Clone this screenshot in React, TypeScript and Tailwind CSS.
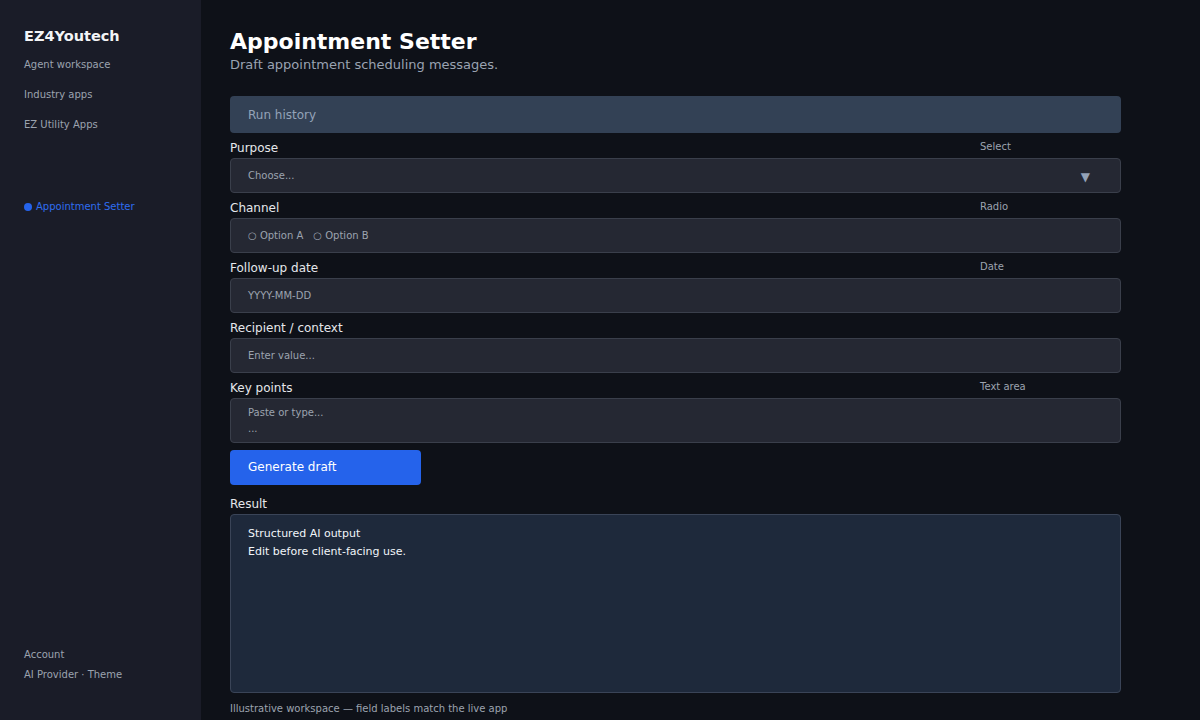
import React from "react";

const font = { fontFamily: '"DejaVu Sans", Verdana, sans-serif' };

function FieldLabel({ label, kind }: { label: string; kind?: string }) {
  return (
    <div className="flex items-start justify-between pt-[7px] mb-[3px] h-[22px]">
      <span className="text-[12px] leading-[16px] text-[#e5e7eb]">{label}</span>
      {kind && <span className="w-[141px] text-[10px] leading-[16px] text-[#9ca3af] -mt-[1px]">{kind}</span>}
    </div>
  );
}

function Box({ children, tall }: { children: React.ReactNode; tall?: boolean }) {
  return (
    <div
      className={`flex ${tall ? "flex-col h-[45px] pt-[7px]" : "items-center h-[35px]"} rounded-[4px] border border-[#3a3f4b] bg-[#252833] px-[17px] text-[10px] text-[#9ca3af]`}
    >
      {children}
    </div>
  );
}

export default function App() {
  return (
    <div className="flex h-[720px] w-[1200px] bg-[#0e1118] overflow-hidden" style={font}>
      <aside className="flex flex-col w-[201px] shrink-0 bg-[#1a1c28] px-6 pt-[28px] pb-[37px]">
        <h1 className="text-[14.5px] leading-[16px] font-bold text-[#f3f4f6]">EZ4Youtech</h1>
        <nav className="mt-[13px] flex flex-col gap-[14px] text-[10px] leading-[16px] text-[#9ca3af]">
          <span>Agent workspace</span>
          <span>Industry apps</span>
          <span>EZ Utility Apps</span>
        </nav>
        <div className="mt-[66px] flex items-center gap-[4px] text-[10px] leading-[16px] text-[#2f6df0]">
          <span className="inline-block w-[8px] h-[8px] rounded-full bg-[#2563eb]" />
          <span>Appointment Setter</span>
        </div>
        <div className="mt-auto flex flex-col gap-[4px] text-[10px] leading-[16px] text-[#9ca3af]">
          <span>Account</span>
          <span>AI Provider · Theme</span>
        </div>
      </aside>

      <main className="flex-1 pl-[29px] pt-[29px]">
        <div className="w-[891px]">
          <h2 className="text-[22px] leading-[26px] font-bold text-white">Appointment Setter</h2>
          <p className="mt-[1px] text-[13px] leading-[18px] text-[#9aa3b2]">Draft appointment scheduling messages.</p>

          <div className="mt-[22px] flex items-center h-[37px] rounded-[4px] bg-[#334155] px-[18px] text-[12px] text-[#94a3b8]">
            Run history
          </div>

          <FieldLabel label="Purpose" kind="Select" />
          <Box>
            <span className="flex-1">Choose...</span>
            <span className="text-[12px] text-[#94a3b8] mr-[13px] mt-[2px]">▼</span>
          </Box>

          <FieldLabel label="Channel" kind="Radio" />
          <Box>
            <span>○ Option A</span>
            <span className="ml-[10px]">○ Option B</span>
          </Box>

          <FieldLabel label="Follow-up date" kind="Date" />
          <Box>YYYY-MM-DD</Box>

          <FieldLabel label="Recipient / context" />
          <Box>Enter value...</Box>

          <FieldLabel label="Key points" kind="Text area" />
          <Box tall>
            <span className="leading-[14px]">Paste or type...</span>
            <span className="leading-[16px] mt-[1px]">...</span>
          </Box>

          <button className="mt-[7px] flex items-center h-[35px] w-[191px] rounded-[4px] bg-[#2563eb] px-[18px] pb-[2px] text-[12px] text-white">
            Generate draft
          </button>

          <div className="pt-[11px] mb-[3px] h-[26px] text-[12px] leading-[16px] text-[#e5e7eb]">Result</div>
          <div className="h-[179px] rounded-[4px] border border-[#3a4457] bg-[#1e293b] px-[17px] pt-[10px] text-[11px] leading-[18px] text-[#f1f5f9]">
            <div>Structured AI output</div>
            <div>Edit before client-facing use.</div>
          </div>

          <p className="mt-[9px] text-[10px] leading-[14px] text-[#9ca3af]">
            Illustrative workspace — field labels match the live app
          </p>
        </div>
      </main>
    </div>
  );
}
